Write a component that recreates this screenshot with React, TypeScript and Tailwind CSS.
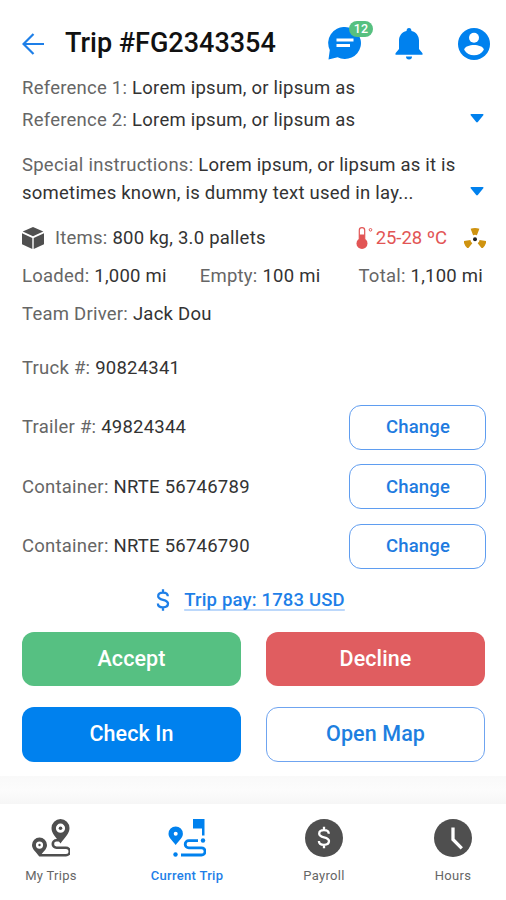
import type { ReactNode } from "react";
import clsx from "clsx";

const Field = ({ label, value }: { label: string; value: string }) => (
  <p className="whitespace-nowrap">
    <span className="text-[#666666]">{label}</span> <span className="text-[#333333]">{value}</span>
  </p>
);

const Caret = () => (
  <svg className="w-[14px] h-[9px] shrink-0" viewBox="0 0 14 9" fill="#0081ee">
    <path d="M0.5 1Q0.3 0 1.3 0H12.7Q13.7 0 13.5 1L7.8 8Q7 8.8 6.2 8Z" />
  </svg>
);

const ChatIcon = () => (
  <svg className="w-[34px] h-[34px]" viewBox="0 0 34 34">
    <path d="M17 0a16 16 0 1 1-7.4 30.2L.5 32.500 1.800 23A16 16 0 0 1 17 0Z" fill="#0081ee" />
    <path d="M8.500 13H25.500M8.500 18.500H22" stroke="#fff" strokeWidth="3" />
  </svg>
);

const BellIcon = () => (
  <svg className="w-[28px] h-[32px]" viewBox="0 0 28 32" fill="#0081ee">
    <path d="M14 0c1.700 0 2.300 1.200 2.500 2.900C21.400 4 24 8 24 12.500V21l3.500 4.200v1.600H.5v-1.600L4 21v-8.500C4 8 6.600 4 11.500 2.900 11.700 1.200 12.300 0 14 0Z" />
    <path d="M11 28.600h6a3 3 0 0 1-6 0Z" />
  </svg>
);

const UserIcon = () => (
  <svg className="w-8 h-8" viewBox="0 0 32 32">
    <circle cx="16" cy="16" r="16" fill="#0081ee" />
    <circle cx="16" cy="9.800" r="5" fill="#fff" />
    <path d="M6.200 21.800C6.200 18.600 12 17 16 17s9.800 1.600 9.800 4.800C23.700 25.500 20 27.300 16 27.300S8.300 25.500 6.200 21.800Z" fill="#fff" />
  </svg>
);

const BoxIcon = () => (
  <svg className="w-[22px] h-[22px]" viewBox="0 0 22 22" fill="#4f4f4f">
    <path d="M11 0 21.300 4.600 11 9.300.7 4.600Z" />
    <path d="M0 6.200 10.300 10.900V21.900L0 17.200Z" />
    <path d="M22 6.200 11.700 10.900V21.900L22 17.200Z" />
  </svg>
);

const ThermometerIcon = () => (
  <svg className="w-[18px] h-[22px]" viewBox="0 0 18 22">
    <path d="M3.300 12V3.300a2.700 2.700 0 0 1 5.400 0V12" fill="none" stroke="#e25555" strokeWidth="1.200" />
    <path d="M3.500 7.500h5V13h-5Z" fill="#e25555" />
    <circle cx="6" cy="16.400" r="5.500" fill="#e25555" />
    <circle cx="14.500" cy="2.800" r="1.300" fill="none" stroke="#e25555" strokeWidth="1" />
  </svg>
);

const BLADE = "M6.600.8Q11-.8 15.400.8L12.900 7.300Q11 6.400 9.100 7.300Z";

const HazardIcon = () => (
  <svg className="w-[22px] h-[20px]" viewBox="0 0 22 20">
    <g fill="#cf9310">
      <path d={BLADE} />
      <path d={BLADE} transform="rotate(120 11 11.500)" />
      <path d={BLADE} transform="rotate(240 11 11.500)" />
    </g>
    <circle cx="11" cy="11.200" r="2" fill="#222" />
  </svg>
);

const DollarSign = ({ className }: { className?: string }) => (
  <svg className={className} viewBox="0 0 14 22" fill="none" stroke="currentColor" strokeWidth="2.300">
    <path d="M11.800 7.300C11.800 5 10 3.700 7 3.700S2.200 5 2.200 7.200C2.200 12 12 9.600 12 14.600 12 17 10 18.300 7 18.300S1.900 17 1.900 14.400M7 .3v3.400M7 18.300v3.400" />
  </svg>
);

const MyTripsIcon = () => (
  <svg className="w-[38px] h-[38px]" viewBox="0 0 38 38">
    <path d="M8 36.300H34a3.800 3.800 0 0 0 0-7.600H24.500a3.700 3.700 0 0 1 0-7.400h3.500" fill="none" stroke="#4f4f4f" strokeWidth="2.600" />
    <path fillRule="evenodd" fill="#4f4f4f" d="M28.500 0a9 9 0 0 1 9 9c0 5.500-4 8.500-9 15.500-5-7-9-10-9-15.500a9 9 0 0 1 9-9Zm0 4.600a4.600 4.600 0 1 0 0 9.200 4.600 4.600 0 0 0 0-9.200Z" />
    <circle cx="28.500" cy="9.200" r="1.800" fill="#4f4f4f" />
    <path fillRule="evenodd" fill="#4f4f4f" d="M7.500 18.500a7.500 7.500 0 0 1 7.500 7.500c0 4.200-3.600 6.500-7.500 11.800C3.600 32.500 0 30.200 0 26a7.500 7.500 0 0 1 7.500-7.500Zm0 4a3.600 3.600 0 1 0 0 7.200 3.600 3.600 0 0 0 0-7.200Z" />
    <circle cx="7.500" cy="26" r="1.200" fill="#4f4f4f" />
  </svg>
);

const CurrentTripIcon = () => (
  <svg className="w-[38px] h-[38px]" viewBox="0 0 38 38" fill="#0081ee">
    <path d="M25 0h11.500v16.500H34V9.500H25Z" />
    <circle cx="35" cy="21.500" r="2.200" />
    <circle cx="7.500" cy="35.500" r="2.200" />
    <path d="M13 36H33.500a3.600 3.600 0 0 0 0-7.200H20.800a3.600 3.600 0 0 1 0-7.200H30" fill="none" stroke="#0081ee" strokeWidth="2.800" />
    <path fillRule="evenodd" d="M7.700 7.500a7.200 7.200 0 0 1 7.200 7.200c0 4.300-3.500 6-7.200 11.300C4 20.700.5 19 .5 14.700a7.200 7.200 0 0 1 7.200-7.200Zm0 5.200a2 2 0 1 0 0 4 2 2 0 0 0 0-4Z" />
  </svg>
);

const PayrollIcon = () => (
  <span className="flex w-[38px] h-[38px] items-center justify-center rounded-full bg-[#4f4f4f] text-white">
    <DollarSign className="w-[14px] h-[23px]" />
  </span>
);

const HoursIcon = () => (
  <svg className="w-[38px] h-[38px]" viewBox="0 0 38 38">
    <circle cx="19" cy="19" r="19" fill="#4f4f4f" />
    <path d="M19 8.500v12l8.800 8.800" fill="none" stroke="#fff" strokeWidth="3.300" />
  </svg>
);

const ChangeRow = ({ label, value }: { label: string; value: string }) => (
  <div className="flex h-[59.5px] items-center justify-between">
    <Field label={label} value={value} />
    <button className="h-[45px] w-[137px] rounded-xl border-[1.5px] border-[#5f9df0] pl-px font-medium tracking-[0.15px] text-[#1e7be0]">
      Change
    </button>
  </div>
);

const NavItem = ({ icon, label, active }: { icon: ReactNode; label: string; active?: boolean }) => (
  <div
    className={clsx(
      "flex w-[100px] flex-col items-center pt-[15px] text-[13px] leading-4 tracking-[0.3px]",
      active ? "font-medium text-[#1e7fe8]" : "text-[#666666]"
    )}
  >
    {icon}
    <span className="mt-[11px] whitespace-nowrap">{label}</span>
  </div>
);

const App = () => {
  return (
    <div className="flex h-[900px] w-[506px] flex-col overflow-hidden bg-white font-['Roboto',sans-serif] text-[18.5px] leading-7 tracking-[0.24px]">
      {/* Header */}
      <header className="flex h-[71px] items-center pl-[22px] pr-4 pt-4">
        <svg className="h-[22px] w-[22px]" viewBox="0 0 22 22" fill="none" stroke="#1e7fe8" strokeWidth="2.200">
          <path d="M22 11H1.500M11.500 1 1.500 11l10 10" />
        </svg>
        <h1 className="ml-[21px] -mt-[2px] whitespace-nowrap text-[27px] font-medium tracking-normal text-[#111111]">
          Trip #FG2343354
        </h1>
        <div className="ml-auto flex items-center">
          <div className="relative mr-[33px]">
            <ChatIcon />
            <span className="absolute -top-[6px] left-[21px] flex h-4 w-6 items-center justify-center rounded-full bg-[#56c080] text-[12.5px] font-medium text-white">
              12
            </span>
          </div>
          <BellIcon />
          <div className="ml-[35px]">
            <UserIcon />
          </div>
        </div>
      </header>

      {/* Trip details */}
      <main className="flex flex-col pl-[22px] pr-5 pt-px">
        <div className="flex h-8 items-center">
          <Field label="Reference 1:" value="Lorem ipsum, or lipsum as" />
        </div>
        <div className="flex h-8 items-center justify-between pr-[2px]">
          <Field label="Reference 2:" value="Lorem ipsum, or lipsum as" />
          <div className="pb-[3px]">
            <Caret />
          </div>
        </div>
        <div className="mt-[14.5px] flex items-end justify-between pr-[2px]">
          <p className="whitespace-nowrap text-[#333333]">
            <span className="text-[#666666]">Special instructions:</span>{" "}
            <span className="tracking-[0.2px]">Lorem ipsum, or lipsum as it is</span>
            <br />
            sometimes known, is dummy text used in lay...
          </p>
          <div className="mb-[11px]">
            <Caret />
          </div>
        </div>

        <div className="mt-[13.5px] flex h-9 items-center">
          <BoxIcon />
          <div className="ml-[11px]">
            <Field label="Items:" value="800 kg, 3.0 pallets" />
          </div>
          <div className="ml-auto flex items-center tracking-[-0.05px] text-[#e25555]">
            <ThermometerIcon />
            <span className="ml-[2px]">25-28 ºC</span>
          </div>
          <div className="ml-[17px]">
            <HazardIcon />
          </div>
        </div>
        <div className="mt-px flex h-[38px] items-center pr-[3px]">
          <Field label="Loaded:" value="1,000 mi" />
          <div className="ml-[33px]">
            <Field label="Empty:" value="100 mi" />
          </div>
          <div className="ml-auto">
            <Field label="Total:" value="1,100 mi" />
          </div>
        </div>
        <div className="flex h-[38px] items-center">
          <Field label="Team Driver:" value="Jack Dou" />
        </div>

        <div className="mt-[5px] flex h-[59.5px] items-center">
          <Field label="Truck #:" value="90824341" />
        </div>
        <ChangeRow label="Trailer #:" value="49824344" />
        <ChangeRow label="Container:" value="NRTE 56746789" />
        <ChangeRow label="Container:" value="NRTE 56746790" />

        <div className="flex h-12 items-center justify-center pr-[7px] font-medium tracking-[0.16px] text-[#1e7fe8]">
          <DollarSign className="h-[22px] w-[14px]" />
          <a className="ml-[14px] underline decoration-[#bcd8fb] decoration-[2px] underline-offset-[3px] [text-decoration-skip-ink:none]">
            Trip pay: 1783 USD
          </a>
        </div>

        {/* Actions */}
        <div className="mt-[7.5px] grid grid-cols-2 gap-x-[25px] gap-y-[21px] pr-px text-[21.5px] font-medium tracking-[0.1px]">
          <button className="h-[54px] rounded-xl bg-[#56c082] text-white">Accept</button>
          <button className="h-[54px] rounded-xl bg-[#e05d60] text-white">Decline</button>
          <button className="h-[55px] rounded-xl bg-[#0081ee] pb-px text-white">Check In</button>
          <button className="h-[55px] rounded-xl border-[1.5px] border-[#6fa4f0] pb-px text-[#1e7fe0]">
            Open Map
          </button>
        </div>
      </main>

      <div className="mt-[14px] h-7 bg-linear-to-b from-[#f9f9f9] via-[#fcfcfc] to-[#f6f6f6]" />

      {/* Bottom navigation */}
      <nav className="grid grid-cols-[136px_137px_129px_100px] pl-px">
        <NavItem icon={<MyTripsIcon />} label="My Trips" />
        <NavItem icon={<CurrentTripIcon />} label="Current Trip" active />
        <NavItem icon={<PayrollIcon />} label="Payroll" />
        <NavItem icon={<HoursIcon />} label="Hours" />
      </nav>
    </div>
  );
};

export default App;
